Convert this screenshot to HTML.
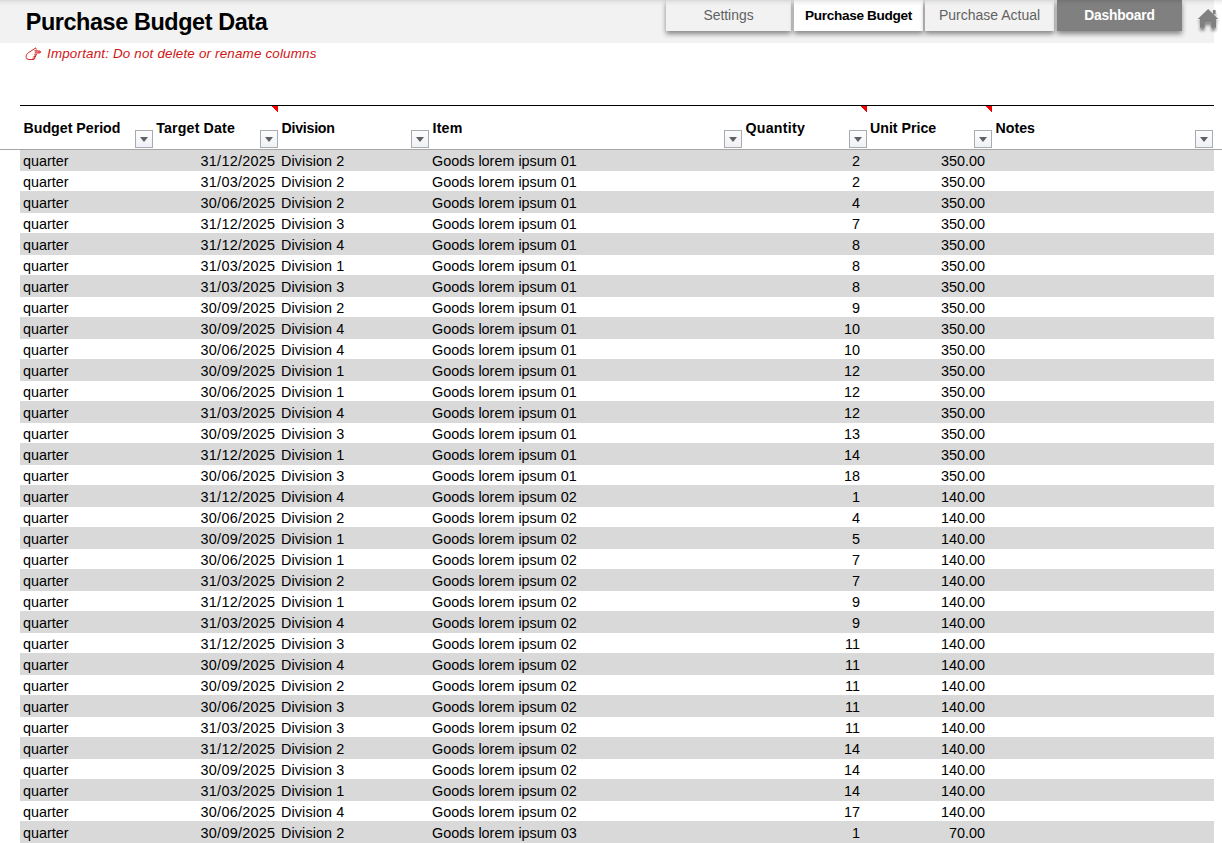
<!DOCTYPE html>
<html lang="en">
<head>
<meta charset="utf-8">
<title>Purchase Budget Data</title>
<style>
html,body{margin:0;padding:0;background:#fff;}
body{width:1222px;height:843px;overflow:hidden;position:relative;font-family:"Liberation Sans",sans-serif;color:#000;}
.band{position:absolute;left:0;top:0;width:1214px;height:43px;background:#f2f2f2;}
.topline{position:absolute;left:0;top:0;width:1222px;height:6px;background:linear-gradient(rgba(0,0,0,.105),rgba(0,0,0,.04) 40%,rgba(0,0,0,0));}
h1{position:absolute;left:25.7px;top:8px;margin:0;font-size:23.4px;line-height:28px;font-weight:bold;white-space:nowrap;letter-spacing:-.4px;}
.note{position:absolute;left:25px;top:45px;font-size:13.4px;line-height:18px;letter-spacing:.18px;font-style:italic;color:#d01414;white-space:nowrap;}
.note .hand{position:absolute;left:-1px;top:1px;}
.note .tx{position:absolute;left:22px;top:0;}
.tab{position:absolute;top:0;height:31px;line-height:31px;text-align:center;font-size:14.2px;box-shadow:0 3px 5px rgba(0,0,0,.45);white-space:nowrap;}
.t1{left:666px;width:125px;background:#f2f2f2;color:#626262;font-size:13.9px;}
.t2{left:794px;width:129px;background:#fff;color:#000;font-weight:bold;font-size:13.6px;letter-spacing:-.33px;}
.t3{left:925px;width:129px;background:#f2f2f2;color:#626262;font-size:14px;}
.t4{left:1057px;width:125px;background:#808080;color:#fff;font-weight:bold;font-size:13.8px;letter-spacing:-.15px;}
.home{position:absolute;left:1194px;top:5px;width:28px;height:30px;}
.hline{position:absolute;left:20px;top:105px;width:1194px;height:1px;background:#000;}
.gline{position:absolute;left:0;top:149px;width:1222px;height:1px;background:#a6a6a6;}
.th{position:absolute;top:119px;font-size:14.2px;line-height:18px;font-weight:bold;white-space:nowrap;}
.fb{position:absolute;top:130px;width:16px;height:16px;border:1px solid #ababab;background:linear-gradient(#fcfdfe,#eef1f6);}
.fb:after{content:"";position:absolute;left:4px;top:6px;border-left:4px solid transparent;border-right:4px solid transparent;border-top:5px solid #606060;}
.rt{position:absolute;top:106px;}
.r{position:absolute;left:20px;width:1194px;height:21px;font-size:14.4px;line-height:21px;white-space:nowrap;}
.r.g{background:#d9d9d9;height:22px;}
.r span{position:absolute;top:1px;}
.r.g span{top:2px;}
.c1{left:3px;}
.c2{right:938.7px;letter-spacing:.27px;}
.c3{left:261px;letter-spacing:.1px;}
.c4{left:412px;}
.c5{right:354px;}
.c6{right:229px;}
</style>
</head>
<body>
<div class="band"></div>
<h1>Purchase Budget Data</h1>
<div class="tab t1">Settings</div>
<div class="tab t2">Purchase Budget</div>
<div class="tab t3">Purchase Actual</div>
<div class="tab t4">Dashboard</div>
<svg class="home" viewBox="0 0 28 30">
<defs><filter id="hs" x="-30%" y="-30%" width="160%" height="180%"><feGaussianBlur in="SourceAlpha" stdDeviation="1.5"/><feOffset dx="0" dy="3"/><feComponentTransfer><feFuncA type="linear" slope="0.45"/></feComponentTransfer><feMerge><feMergeNode/><feMergeNode in="SourceGraphic"/></feMerge></filter></defs>
<g filter="url(#hs)" fill="#808080"><path d="M14.1 3.9 L3.8 14 H6 V22.8 H10.8 V17.2 H17.1 V22.8 H22 V14 H24.3 Z"/><rect x="18.9" y="5" width="2.7" height="4"/></g>
</svg>
<div class="topline"></div>
<div class="note"><svg class="hand" viewBox="24 46 19 15" width="19" height="15"><g fill="none" stroke="#d01414" stroke-width=".9" stroke-linecap="round" stroke-linejoin="round"><path d="M35.4 48.2 L28.4 52.7 Q25.6 54.7 26 57.3 Q26.4 59.5 29 59.5 L33.9 59.5 L36.3 54.4"/><path d="M34.8 50.7 L40 51.1 Q41.2 52 40 53 L35 53" fill="#f0a0a0"/><path d="M34.4 54.9 H36.2 M33.8 56.6 H35.6 M32.8 58.2 H34.8"/><path d="M35.4 48.2 L36.5 49"/></g></svg><span class="tx">Important: Do not delete or rename columns</span></div>

<div class="hline"></div>
<div class="th" style="left:23.5px">Budget Period</div>
<div class="th" style="left:156.3px;letter-spacing:.15px">Target Date</div>
<div class="th" style="left:281.5px;letter-spacing:-.25px">Division</div>
<div class="th" style="left:432.5px;letter-spacing:.2px">Item</div>
<div class="th" style="left:745.5px;letter-spacing:.25px">Quantity</div>
<div class="th" style="left:870px">Unit Price</div>
<div class="th" style="left:995.5px">Notes</div>
<div class="fb" style="left:135px"></div>
<div class="fb" style="left:260px"></div>
<div class="fb" style="left:411px"></div>
<div class="fb" style="left:724px"></div>
<div class="fb" style="left:849px"></div>
<div class="fb" style="left:974px"></div>
<div class="fb" style="left:1195px"></div>
<svg class="rt" style="left:272px" width="6" height="7" viewBox="0 0 6 7" shape-rendering="crispEdges"><polygon points="-0.6,0 6,0 6,6.6" fill="#f20000"/></svg>
<svg class="rt" style="left:861px" width="6" height="7" viewBox="0 0 6 7" shape-rendering="crispEdges"><polygon points="-0.6,0 6,0 6,6.6" fill="#f20000"/></svg>
<svg class="rt" style="left:986px" width="6" height="7" viewBox="0 0 6 7" shape-rendering="crispEdges"><polygon points="-0.6,0 6,0 6,6.6" fill="#f20000"/></svg>
<div class="r g" style="top:149px"><span class="c1">quarter</span><span class="c2">31/12/2025</span><span class="c3">Division 2</span><span class="c4">Goods lorem ipsum 01</span><span class="c5">2</span><span class="c6">350.00</span></div>
<div class="r" style="top:171px"><span class="c1">quarter</span><span class="c2">31/03/2025</span><span class="c3">Division 2</span><span class="c4">Goods lorem ipsum 01</span><span class="c5">2</span><span class="c6">350.00</span></div>
<div class="r g" style="top:191px"><span class="c1">quarter</span><span class="c2">30/06/2025</span><span class="c3">Division 2</span><span class="c4">Goods lorem ipsum 01</span><span class="c5">4</span><span class="c6">350.00</span></div>
<div class="r" style="top:213px"><span class="c1">quarter</span><span class="c2">31/12/2025</span><span class="c3">Division 3</span><span class="c4">Goods lorem ipsum 01</span><span class="c5">7</span><span class="c6">350.00</span></div>
<div class="r g" style="top:233px"><span class="c1">quarter</span><span class="c2">31/12/2025</span><span class="c3">Division 4</span><span class="c4">Goods lorem ipsum 01</span><span class="c5">8</span><span class="c6">350.00</span></div>
<div class="r" style="top:255px"><span class="c1">quarter</span><span class="c2">31/03/2025</span><span class="c3">Division 1</span><span class="c4">Goods lorem ipsum 01</span><span class="c5">8</span><span class="c6">350.00</span></div>
<div class="r g" style="top:275px"><span class="c1">quarter</span><span class="c2">31/03/2025</span><span class="c3">Division 3</span><span class="c4">Goods lorem ipsum 01</span><span class="c5">8</span><span class="c6">350.00</span></div>
<div class="r" style="top:297px"><span class="c1">quarter</span><span class="c2">30/09/2025</span><span class="c3">Division 2</span><span class="c4">Goods lorem ipsum 01</span><span class="c5">9</span><span class="c6">350.00</span></div>
<div class="r g" style="top:317px"><span class="c1">quarter</span><span class="c2">30/09/2025</span><span class="c3">Division 4</span><span class="c4">Goods lorem ipsum 01</span><span class="c5">10</span><span class="c6">350.00</span></div>
<div class="r" style="top:339px"><span class="c1">quarter</span><span class="c2">30/06/2025</span><span class="c3">Division 4</span><span class="c4">Goods lorem ipsum 01</span><span class="c5">10</span><span class="c6">350.00</span></div>
<div class="r g" style="top:359px"><span class="c1">quarter</span><span class="c2">30/09/2025</span><span class="c3">Division 1</span><span class="c4">Goods lorem ipsum 01</span><span class="c5">12</span><span class="c6">350.00</span></div>
<div class="r" style="top:381px"><span class="c1">quarter</span><span class="c2">30/06/2025</span><span class="c3">Division 1</span><span class="c4">Goods lorem ipsum 01</span><span class="c5">12</span><span class="c6">350.00</span></div>
<div class="r g" style="top:401px"><span class="c1">quarter</span><span class="c2">31/03/2025</span><span class="c3">Division 4</span><span class="c4">Goods lorem ipsum 01</span><span class="c5">12</span><span class="c6">350.00</span></div>
<div class="r" style="top:423px"><span class="c1">quarter</span><span class="c2">30/09/2025</span><span class="c3">Division 3</span><span class="c4">Goods lorem ipsum 01</span><span class="c5">13</span><span class="c6">350.00</span></div>
<div class="r g" style="top:443px"><span class="c1">quarter</span><span class="c2">31/12/2025</span><span class="c3">Division 1</span><span class="c4">Goods lorem ipsum 01</span><span class="c5">14</span><span class="c6">350.00</span></div>
<div class="r" style="top:465px"><span class="c1">quarter</span><span class="c2">30/06/2025</span><span class="c3">Division 3</span><span class="c4">Goods lorem ipsum 01</span><span class="c5">18</span><span class="c6">350.00</span></div>
<div class="r g" style="top:485px"><span class="c1">quarter</span><span class="c2">31/12/2025</span><span class="c3">Division 4</span><span class="c4">Goods lorem ipsum 02</span><span class="c5">1</span><span class="c6">140.00</span></div>
<div class="r" style="top:507px"><span class="c1">quarter</span><span class="c2">30/06/2025</span><span class="c3">Division 2</span><span class="c4">Goods lorem ipsum 02</span><span class="c5">4</span><span class="c6">140.00</span></div>
<div class="r g" style="top:527px"><span class="c1">quarter</span><span class="c2">30/09/2025</span><span class="c3">Division 1</span><span class="c4">Goods lorem ipsum 02</span><span class="c5">5</span><span class="c6">140.00</span></div>
<div class="r" style="top:549px"><span class="c1">quarter</span><span class="c2">30/06/2025</span><span class="c3">Division 1</span><span class="c4">Goods lorem ipsum 02</span><span class="c5">7</span><span class="c6">140.00</span></div>
<div class="r g" style="top:569px"><span class="c1">quarter</span><span class="c2">31/03/2025</span><span class="c3">Division 2</span><span class="c4">Goods lorem ipsum 02</span><span class="c5">7</span><span class="c6">140.00</span></div>
<div class="r" style="top:591px"><span class="c1">quarter</span><span class="c2">31/12/2025</span><span class="c3">Division 1</span><span class="c4">Goods lorem ipsum 02</span><span class="c5">9</span><span class="c6">140.00</span></div>
<div class="r g" style="top:611px"><span class="c1">quarter</span><span class="c2">31/03/2025</span><span class="c3">Division 4</span><span class="c4">Goods lorem ipsum 02</span><span class="c5">9</span><span class="c6">140.00</span></div>
<div class="r" style="top:633px"><span class="c1">quarter</span><span class="c2">31/12/2025</span><span class="c3">Division 3</span><span class="c4">Goods lorem ipsum 02</span><span class="c5">11</span><span class="c6">140.00</span></div>
<div class="r g" style="top:653px"><span class="c1">quarter</span><span class="c2">30/09/2025</span><span class="c3">Division 4</span><span class="c4">Goods lorem ipsum 02</span><span class="c5">11</span><span class="c6">140.00</span></div>
<div class="r" style="top:675px"><span class="c1">quarter</span><span class="c2">30/09/2025</span><span class="c3">Division 2</span><span class="c4">Goods lorem ipsum 02</span><span class="c5">11</span><span class="c6">140.00</span></div>
<div class="r g" style="top:695px"><span class="c1">quarter</span><span class="c2">30/06/2025</span><span class="c3">Division 3</span><span class="c4">Goods lorem ipsum 02</span><span class="c5">11</span><span class="c6">140.00</span></div>
<div class="r" style="top:717px"><span class="c1">quarter</span><span class="c2">31/03/2025</span><span class="c3">Division 3</span><span class="c4">Goods lorem ipsum 02</span><span class="c5">11</span><span class="c6">140.00</span></div>
<div class="r g" style="top:737px"><span class="c1">quarter</span><span class="c2">31/12/2025</span><span class="c3">Division 2</span><span class="c4">Goods lorem ipsum 02</span><span class="c5">14</span><span class="c6">140.00</span></div>
<div class="r" style="top:759px"><span class="c1">quarter</span><span class="c2">30/09/2025</span><span class="c3">Division 3</span><span class="c4">Goods lorem ipsum 02</span><span class="c5">14</span><span class="c6">140.00</span></div>
<div class="r g" style="top:779px"><span class="c1">quarter</span><span class="c2">31/03/2025</span><span class="c3">Division 1</span><span class="c4">Goods lorem ipsum 02</span><span class="c5">14</span><span class="c6">140.00</span></div>
<div class="r" style="top:801px"><span class="c1">quarter</span><span class="c2">30/06/2025</span><span class="c3">Division 4</span><span class="c4">Goods lorem ipsum 02</span><span class="c5">17</span><span class="c6">140.00</span></div>
<div class="r g" style="top:821px"><span class="c1">quarter</span><span class="c2">30/09/2025</span><span class="c3">Division 2</span><span class="c4">Goods lorem ipsum 03</span><span class="c5">1</span><span class="c6">70.00</span></div>
<div class="gline"></div>
</body>
</html>
